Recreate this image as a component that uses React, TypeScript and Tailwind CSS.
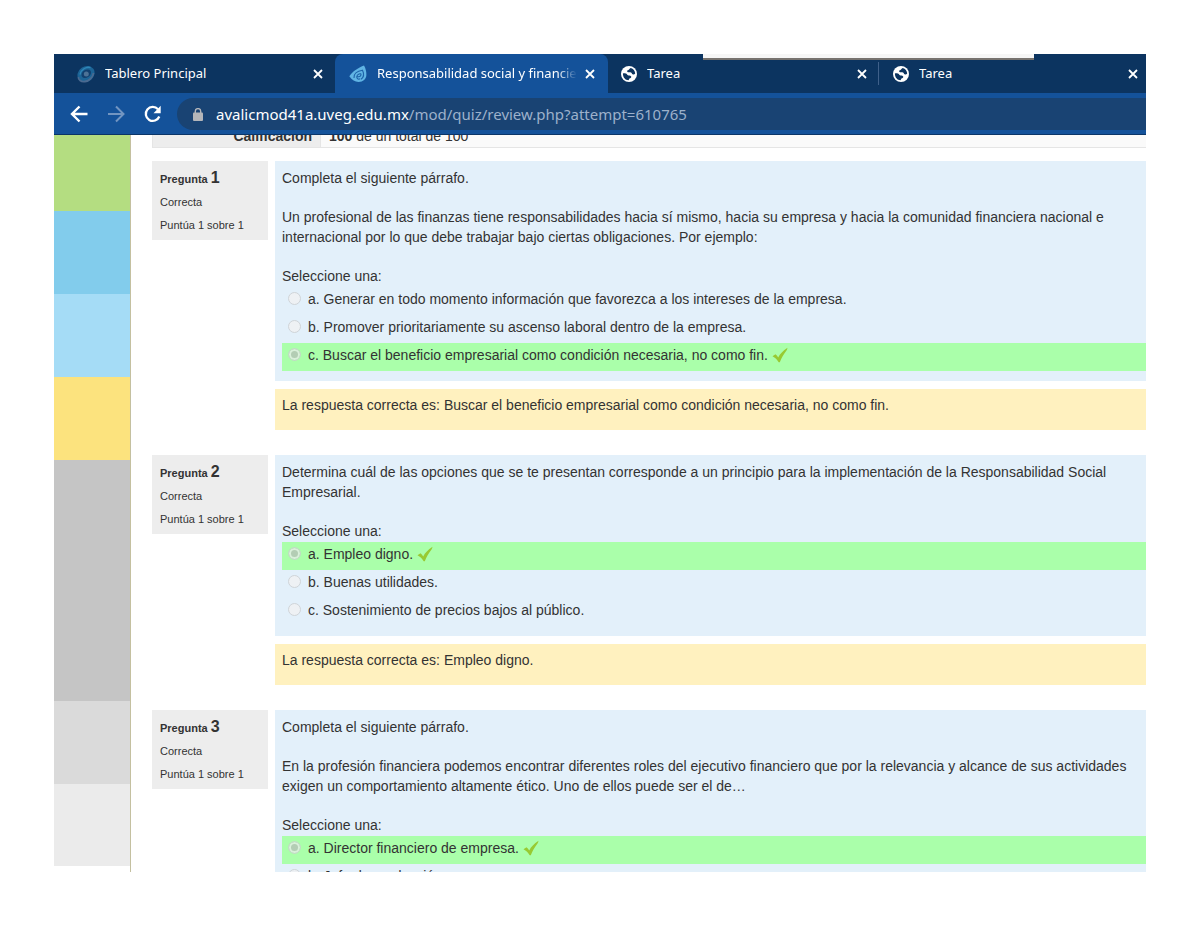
import type { ReactNode } from 'react';

interface Tab {
  title: string;
  icon: ReactNode;
  active?: boolean;
  width: string;
}

interface Question {
  number: number;
  paragraphs: string[];
  options: string[];
  correct: number;
  answer?: string;
}

const questions: Question[] = [
  {
    number: 1,
    paragraphs: [
      'Completa el siguiente párrafo.',
      'Un profesional de las finanzas tiene responsabilidades hacia sí mismo, hacia su empresa y hacia la comunidad financiera nacional e internacional por lo que debe trabajar bajo ciertas obligaciones. Por ejemplo:',
    ],
    options: [
      'Generar en todo momento información que favorezca a los intereses de la empresa.',
      'Promover prioritariamente su ascenso laboral dentro de la empresa.',
      'Buscar el beneficio empresarial como condición necesaria, no como fin.',
    ],
    correct: 2,
    answer: 'Buscar el beneficio empresarial como condición necesaria, no como fin.',
  },
  {
    number: 2,
    paragraphs: [
      'Determina cuál de las opciones que se te presentan corresponde a un principio para la implementación de la Responsabilidad Social Empresarial.',
    ],
    options: ['Empleo digno.', 'Buenas utilidades.', 'Sostenimiento de precios bajos al público.'],
    correct: 0,
    answer: 'Empleo digno.',
  },
  {
    number: 3,
    paragraphs: [
      'Completa el siguiente párrafo.',
      'En la profesión financiera podemos encontrar diferentes roles del ejecutivo financiero que por la relevancia y alcance de sus actividades exigen un comportamiento altamente ético. Uno de ellos puede ser el de…',
    ],
    options: ['Director financiero de empresa.', 'Jefe de producción.'],
    correct: 0,
  },
];

function SwirlIcon() {
  return (
    <svg viewBox="0 0 18 18" className="size-[18px] shrink-0" aria-hidden="true">
      <ellipse cx="9" cy="9" rx="9" ry="7.6" transform="rotate(-35 9 9)" fill="#1d6496" />
      <path d="M1.5 12C1 15 4 17 8 16.500c4-.5 8-4 8.500-8.500" fill="none" stroke="#4b6a90" strokeWidth="1.800" />
      <path d="M3 9.500C4 4.500 9 1.500 13.500 2.500" fill="none" stroke="#2e86b8" strokeWidth="1.400" />
      <ellipse cx="9.300" cy="8.700" rx="5.200" ry="3.800" transform="rotate(-35 9.300 8.700)" fill="#12406f" />
      <circle cx="9.300" cy="8.900" r="2.500" fill="#4d7296" />
    </svg>
  );
}

function DropIcon() {
  return (
    <svg viewBox="0 0 18 18" className="size-[18px] shrink-0" aria-hidden="true">
      <path d="M15 .5C10 2.500 3.500 6 .3 11.300 3 15 6 17 9.500 17c4.500 0 7.700-3 7.900-7C17.500 6.500 16.500 3 15 .5z" fill="#60b4e4" />
      <path d="M5 13c-.5-4 3-7 8.500-7.800C15.300 9 14.500 12.500 12 14.300" fill="none" stroke="#1d62a8" strokeWidth="1.100" />
      <path d="M8 11.800c2.500 0 4-1 4-2.400 0-1.300-3.800-.4-4.200 2.200-.3 2 1.500 3.200 3.400 2.200" fill="none" stroke="#1d62a8" strokeWidth="1.100" />
    </svg>
  );
}

function GlobeIcon() {
  return (
    <svg viewBox="0 0 16 16" className="size-4 shrink-0" aria-hidden="true">
      <circle cx="8" cy="8" r="8" fill="#fff" />
      <path d="M9.800 1.900c2.500.7 4.300 2.900 4.400 5.600-.6.900-1.700 1.100-2.600.7-.8-.4-.8-1.500-1.700-1.800C8.800 6 7 6.700 6.300 5.700c-.6-1 .3-1.600 1.200-1.800.9-.3.800-1.600 2.300-2z" fill="#0c3460" />
      <path d="M1.900 7.400c1.700-.1 3.300-.1 4.200 1 .6.700 1 1.200 2.300 1.200 1.500.1 2.300.9 1.700 2-.5.8-1.600.8-2 1.500-.3.500-.2.800-.6 1.100C4.400 14 1.900 11.500 1.900 7.400z" fill="#0c3460" />
    </svg>
  );
}

function CloseIcon() {
  return (
    <svg viewBox="0 0 10 10" className="size-[10px]" aria-hidden="true">
      <path d="M1 1l8 8M9 1L1 9" stroke="#fff" strokeWidth="1.800" fill="none" />
    </svg>
  );
}

function CheckIcon() {
  return (
    <svg viewBox="0 0 16 16" className="size-4" role="img" aria-label="Correcta">
      <path d="M.5 9.300l3-2.100c1.200.9 2 1.900 2.700 3.200C8 7 11 3.800 15.500.8c-.2 1.200-.5 1.900-1 2.700C11.800 7 9.500 10.800 7.800 15.200H6.700C5.200 12.700 3.200 10.900.5 9.300z" fill="#98ca32" />
    </svg>
  );
}

const tabs: Tab[] = [
  { title: 'Tablero Principal', icon: <SwirlIcon />, width: 'w-[281px] pl-[23px] pr-3' },
  { title: 'Responsabilidad social y financiera', icon: <DropIcon />, active: true, width: 'w-[273px] pl-[14px] pr-[13px]' },
  { title: 'Tarea', icon: <GlobeIcon />, width: 'w-[271px] pl-[13px] pr-3' },
  { title: 'Tarea', icon: <GlobeIcon />, width: 'flex-1 pl-[14px] pr-2' },
];

const stripes = [
  'h-[76px] bg-[#b4dd81]',
  'h-[83px] bg-[#82ccec]',
  'h-[83px] bg-[#a5dcf6]',
  'h-[83px] bg-[#fce37e]',
  'h-[241px] bg-[#c5c5c5]',
  'h-[83px] bg-[#dadada]',
  'h-[82px] bg-[#ebebeb]',
];

function TabBar() {
  return (
    <div className="relative flex h-[39px] bg-[#0c3460]">
      {tabs.map((tab, i) => (
        <div
          key={i}
          className={`relative flex min-w-0 items-center ${tab.width} ${tab.active ? 'rounded-t-lg bg-[#14529a]' : ''}`}
        >
          {tab.icon}
          <span
            className={`ml-[10px] flex-1 overflow-hidden whitespace-nowrap ${
              tab.active ? 'mr-2 mask-r-from-90%' : ''
            }`}
          >
            {tab.title}
          </span>
          <button type="button" aria-label="Cerrar pestaña" className="shrink-0">
            <CloseIcon />
          </button>
          {i === 2 && <span className="absolute top-2 right-0 h-[23px] w-px bg-[#3f608a]" />}
        </div>
      ))}
      {/* edge of the window sitting behind the browser */}
      <div className="absolute top-0 right-[112px] h-[6px] w-[331px] border-b-2 border-[#77736f] bg-[#f6f6f6]" />
    </div>
  );
}

function Toolbar() {
  return (
    <div className="flex items-center border-b border-[#0b3567] bg-[#14529a] pt-[5px] pb-1 pl-4">
      <button type="button" aria-label="Atrás" className="mr-5">
        <svg viewBox="0 0 18 18" className="size-[18px]" fill="none" stroke="#fff" strokeWidth="2.400">
          <path d="M17.500 9H2.500M9.500 1.500L2 9l7.500 7.500" />
        </svg>
      </button>
      <button type="button" aria-label="Adelante" className="mr-[18px]" disabled>
        <svg viewBox="0 0 18 18" className="size-[18px]" fill="none" stroke="#7295c1" strokeWidth="2">
          <path d="M0 9h15M8 1.500L15.500 9 8 16.500" />
        </svg>
      </button>
      <button type="button" aria-label="Recargar" className="mr-[15px]">
        <svg viewBox="0 0 18 18" className="size-[18px]">
          <path d="M15.300 11.500A7 7 0 1 1 14 4.200" fill="none" stroke="#fff" strokeWidth="2.300" />
          <path d="M16.700 .8v7.400H9.500z" fill="#fff" />
        </svg>
      </button>
      <div className="flex h-8 flex-1 items-center rounded-l-full bg-[#194373] pl-4">
        <svg viewBox="0 0 10 13" className="mr-[13px] h-[13px] w-[10px]" aria-hidden="true">
          <rect y="4.500" width="10" height="8.500" rx="1" fill="#b4b6ba" />
          <path d="M2.300 5V3.300a2.700 2.700 0 0 1 5.400 0V5" fill="none" stroke="#b4b6ba" strokeWidth="1.400" />
        </svg>
        <a href="#" className="text-[15px] text-[#9db1cb]">
          <span className="text-white">avalicmod41a.uveg.edu.mx</span>/mod/quiz/review.php?attempt=610765
        </a>
      </div>
    </div>
  );
}

function QuestionBlock({ question }: { question: Question }) {
  return (
    <section className="mb-[25px] flex items-start gap-[7px]">
      <div className="w-[116px] shrink-0 bg-[#ededed] px-2 pt-[7px] pb-[3px] text-[11px] leading-[23px]">
        <h3 className="font-bold">
          Pregunta <span className="text-base leading-none">{question.number}</span>
        </h3>
        <p>Correcta</p>
        <p>Puntúa 1 sobre 1</p>
      </div>
      <div className="min-w-0 flex-1">
        <div className="bg-[#e3f0fa] px-[7px] pt-[7px] pb-[10px]">
          {question.paragraphs.map((text) => (
            <p key={text} className="mb-[19px]">
              {text}
            </p>
          ))}
          <fieldset>
            <legend className="mb-px">Seleccione una:</legend>
            {question.options.map((option, i) => (
              <label
                key={option}
                className={`flex h-7 items-start pt-[2px] pl-[6px] ${i === question.correct ? 'bg-[#aaffaa]' : ''}`}
              >
                <input
                  type="radio"
                  name={`q${question.number}`}
                  disabled
                  defaultChecked={i === question.correct}
                  className="mt-[3px] mr-[7px] size-[13px] appearance-none rounded-full border border-[#cfd4d8] bg-[#eef1f4] checked:border-[#c3dec6] checked:bg-[#b3cdb4] checked:inset-ring-2 checked:inset-ring-[#d9f0da]"
                />
                <span>
                  {'abc'[i]}. {option}
                </span>
                {i === question.correct && (
                  <span className="mt-[2px] ml-1">
                    <CheckIcon />
                  </span>
                )}
              </label>
            ))}
          </fieldset>
        </div>
        {question.answer && (
          <div className="mt-2 bg-[#fff1bf] px-[7px] pt-[6px] pb-[15px]">La respuesta correcta es: {question.answer}</div>
        )}
      </div>
    </section>
  );
}

export default function App() {
  return (
    <div className="flex h-screen flex-col bg-white px-[54px] pt-[54px] pb-[55px]">
      <header className="shrink-0 font-['Noto_Sans','Open_Sans',sans-serif] text-[13px] text-white">
        <TabBar />
        <Toolbar />
      </header>
      <div className="flex min-h-0 flex-1 overflow-hidden font-['Liberation_Sans',Arial,sans-serif] text-sm leading-5 text-[#333]">
        <aside className="w-[77px] shrink-0 border-r border-[#c4c0a0]">
          {stripes.map((stripe) => (
            <div key={stripe} className={stripe} />
          ))}
        </aside>
        {/* the page runs past the right edge of the window */}
        <main className="-mr-4 ml-[21px] min-w-0 flex-1">
          <table className="-mt-4 mb-[13px] w-full border-collapse border border-[#e5e5e5]">
            <tbody>
              <tr className="h-7">
                <th scope="row" className="w-[168px] border border-[#e5e5e5] bg-[#ededed] pt-1 pr-2 text-right font-bold">
                  Calificación
                </th>
                <td className="bg-[#fafafa] pt-1 pl-2">
                  <b>100</b> de un total de 100
                </td>
              </tr>
            </tbody>
          </table>
          {questions.map((question) => (
            <QuestionBlock key={question.number} question={question} />
          ))}
        </main>
      </div>
    </div>
  );
}
